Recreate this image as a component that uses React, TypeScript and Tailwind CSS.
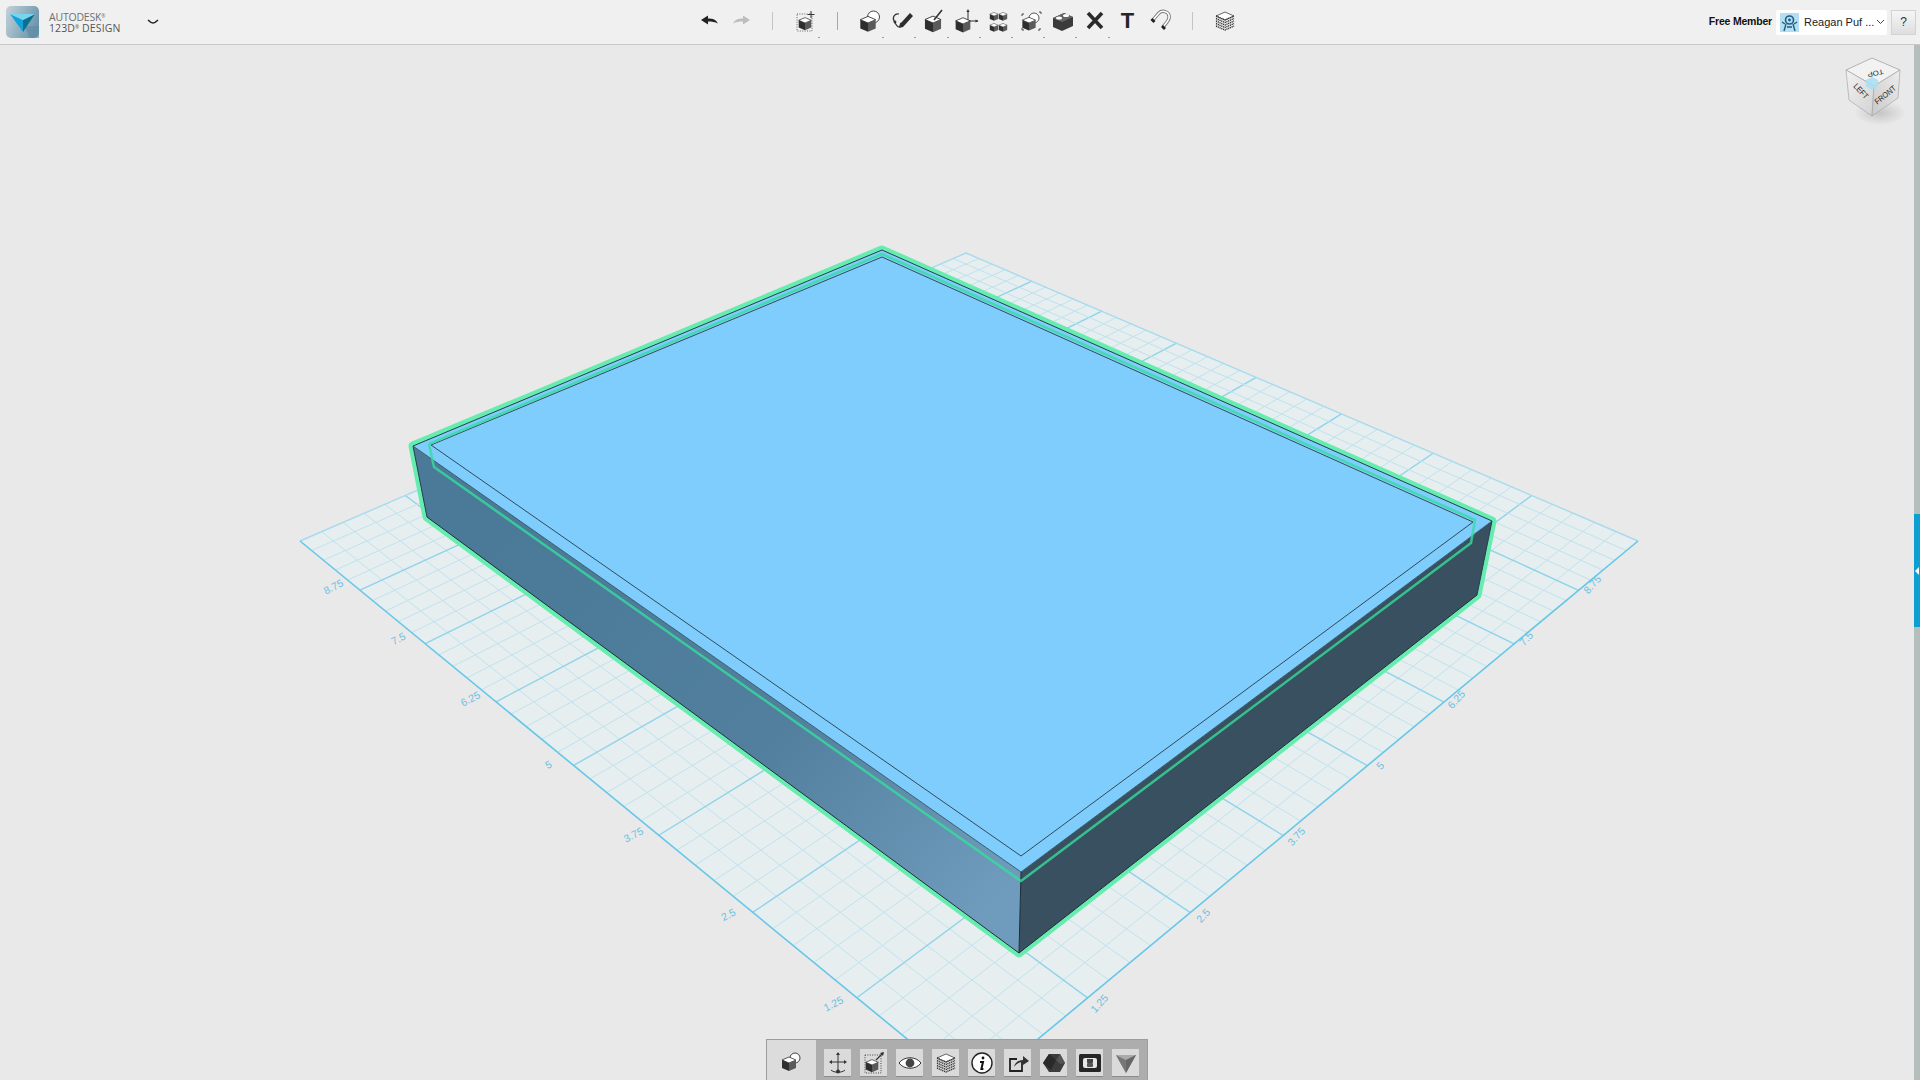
import type { ReactNode } from 'react'

type Pt = [number, number]

// grid plate corners in page coordinates, perspective is solved from them
const A: Pt = [973, 1093]
const B: Pt = [300, 541]
const C: Pt = [966, 253]
const D: Pt = [1638, 541]

function makeHomography() {
  const sx = A[0] - B[0] + C[0] - D[0]
  const sy = A[1] - B[1] + C[1] - D[1]
  const dx1 = B[0] - C[0]
  const dx2 = D[0] - C[0]
  const dy1 = B[1] - C[1]
  const dy2 = D[1] - C[1]
  const den = dx1 * dy2 - dx2 * dy1
  const g = (sx * dy2 - dx2 * sy) / den
  const h = (dx1 * sy - sx * dy1) / den
  return (u: number, v: number): Pt => {
    const w = g * u + h * v + 1
    return [
      ((B[0] - A[0] + g * B[0]) * u + (D[0] - A[0] + h * D[0]) * v + A[0]) / w,
      ((B[1] - A[1] + g * B[1]) * u + (D[1] - A[1] + h * D[1]) * v + A[1]) / w,
    ]
  }
}

const project = makeHomography()
const GRID_STEPS = 40

function GridLines() {
  const lines = []
  for (let i = 1; i < GRID_STEPS; i++) {
    const t = i / GRID_STEPS
    const major = i % 5 === 0
    const stroke = major ? '#8fd3ea' : '#c0e2ed'
    const width = major ? 1.4 : 1
    const a = project(t, 0)
    const b = project(t, 1)
    const c = project(0, t)
    const d = project(1, t)
    lines.push(<line key={`u${i}`} x1={a[0]} y1={a[1]} x2={b[0]} y2={b[1]} stroke={stroke} strokeWidth={width} />)
    lines.push(<line key={`v${i}`} x1={c[0]} y1={c[1]} x2={d[0]} y2={d[1]} stroke={stroke} strokeWidth={width} />)
  }
  return <>{lines}</>
}

const leftLabels: [string, number, number][] = [
  ['8.75', 335, 590], ['7.5', 400, 642], ['6.25', 472, 702], ['5', 550, 768],
  ['3.75', 635, 838], ['2.5', 730, 918], ['1.25', 835, 1007],
]
const rightLabels: [string, number, number][] = [
  ['8.75', 1595, 587], ['7.5', 1529, 641], ['6.25', 1459, 702], ['5', 1383, 768],
  ['3.75', 1299, 839], ['2.5', 1206, 918], ['1.25', 1102, 1006],
]

function Scene() {
  return (
    <svg className="block h-full w-full" viewBox="0 45 1914 1035">
      <defs>
        <linearGradient id="sideL" x1="520" y1="520" x2="980" y2="920" gradientUnits="userSpaceOnUse">
          <stop offset="0%" stopColor="#4a7a98" />
          <stop offset="55%" stopColor="#527f9e" />
          <stop offset="100%" stopColor="#6f9cbc" />
        </linearGradient>
      </defs>

      {/* grid plate */}
      <polygon points={[A, B, C, D].map((p) => p.join(',')).join(' ')} fill="#e6eef0" />
      <GridLines />
      <line x1={C[0]} y1={C[1]} x2={B[0]} y2={B[1]} stroke="#a6dbed" strokeWidth="1.4" />
      <line x1={C[0]} y1={C[1]} x2={D[0]} y2={D[1]} stroke="#a6dbed" strokeWidth="1.4" />
      <line x1={B[0]} y1={B[1]} x2={A[0]} y2={A[1]} stroke="#66c6e8" strokeWidth="1.6" />
      <line x1={D[0]} y1={D[1]} x2={A[0]} y2={A[1]} stroke="#66c6e8" strokeWidth="1.6" />
      {leftLabels.map(([t, x, y]) => (
        <text key={`l${t}`} x={x} y={y} transform={`rotate(-27 ${x} ${y})`} textAnchor="middle" className="font-['Liberation_Sans',sans-serif]" fontSize="10.5" fill="#69c1e2">{t}</text>
      ))}
      {rightLabels.map(([t, x, y]) => (
        <text key={`r${t}`} x={x} y={y} transform={`rotate(-48 ${x} ${y})`} textAnchor="middle" className="font-['Liberation_Sans',sans-serif]" fontSize="10.5" fill="#69c1e2">{t}</text>
      ))}

      {/* selected body */}
      <polygon points="413,446 882,250 1492,521 1477,595 1019,953 427,517" fill="#66ecaf" stroke="#66ecaf" strokeWidth="9" strokeLinejoin="round" />
      <polygon points="413,446 1021,872 1019,953 427,517" fill="url(#sideL)" />
      <polygon points="1021,872 1492,521 1477,595 1019,953" fill="#38505f" />
      <polygon points="413,446 882,250 1492,521 1021,872" fill="#7fcdfc" />
      <polyline points="427,517 1019,953 1477,595" fill="none" stroke="#1d2e3b" strokeWidth="1" />
      <polyline points="427,517 413,446 882,250 1492,521 1477,595" fill="none" stroke="#24404f" strokeWidth="1" />
      <polyline points="413,446 1021,872 1492,521" fill="none" stroke="#3c5a6c" strokeWidth="1" />
      <line x1="1021" y1="872" x2="1019" y2="953" stroke="#1d2e3b" strokeWidth="1" />
      <polygon points="431,445 882,257 1473,522 1021,856" fill="none" stroke="#33495a" strokeWidth="1" />
      <polyline points="429,444 882,254 1475,520 1471,543 1021,881 434,467 429,444" fill="none" stroke="#36dc9f" strokeWidth="2.5" opacity="0.8" strokeLinejoin="round" />
    </svg>
  )
}

function Cube({ x, y, s = 1, top = '#fff' }: { x: number; y: number; s?: number; top?: string }) {
  return (
    <g transform={`translate(${x} ${y}) scale(${s})`}>
      <polygon points="0,-6 7,-3 0,0 -7,-3" fill={top} stroke="#333" strokeWidth="0.8" />
      <polygon points="-7,-3 0,0 0,8 -7,5" fill="#2e2e2e" />
      <polygon points="7,-3 0,0 0,8 7,5" fill="#5a5a5a" />
    </g>
  )
}

function Stripes() {
  return (
    <g>
      <polygon points="12,3 21,7 12,11 3,7" fill="#fff" stroke="#444" strokeWidth="0.8" />
      {[9, 11.5, 14, 16.5, 19].map((y) => (
        <polyline key={y} points={`3,${y - 2} 12,${y + 2} 21,${y - 2}`} fill="none" stroke="#333" strokeWidth="1.4" strokeDasharray="1.2 0.7" />
      ))}
    </g>
  )
}

function Icon({ children }: { children: ReactNode }) {
  return (
    <svg width="24" height="24" viewBox="0 0 24 24" fill="none">
      {children}
    </svg>
  )
}

const toolIcons: { key: string; dot: boolean; icon: ReactNode }[] = [
  {
    key: 'primitive', dot: true,
    icon: <Icon><circle cx="15.5" cy="8" r="6" stroke="#444" strokeWidth="1" fill="#fff" /><Cube x={10} y={14} s={1.1} /></Icon>,
  },
  {
    key: 'sketch', dot: true,
    icon: <Icon><path d="M9 5c-4-1-7 3-5 7s3 6 5 6c2 0 1-4 2-4" stroke="#333" strokeWidth="1.2" /><path d="M10 15l-1 4 4-1 10-11-3-3z" fill="#2e2e2e" /><circle cx="5" cy="13" r="1.4" fill="#333" /></Icon>,
  },
  {
    key: 'construct', dot: true,
    icon: <Icon><Cube x={11} y={14} s={1.15} /><path d="M12 11l8-10" stroke="#333" strokeWidth="1.6" /></Icon>,
  },
  {
    key: 'modify', dot: true,
    icon: <Icon><Cube x={8} y={15} s={1.05} /><path d="M13 11V2M14 12h9" stroke="#333" strokeWidth="1" /><path d="M13 0l-1.6 3h3.2zM23.5 12l-3-1.6v3.2z" fill="#333" /></Icon>,
  },
  {
    key: 'pattern', dot: true,
    icon: <Icon><Cube x={7} y={7} s={0.6} /><Cube x={16} y={7} s={0.6} /><Cube x={7} y={18} s={0.6} /><Cube x={16} y={18} s={0.6} /></Icon>,
  },
  {
    key: 'group', dot: true,
    icon: <Icon><circle cx="15" cy="9" r="5" stroke="#555" strokeWidth="1" fill="#fff" /><Cube x={10} y={14} s={0.95} /><path d="M3 5h2M3 5v2M20 3h2v2M3 21h2M3 21v-2M21 21h-2M21 21v-2" stroke="#444" strokeWidth="1" /></Icon>,
  },
  {
    key: 'combine', dot: true,
    icon: <Icon><polygon points="2,9 13,4 22,8 22,17 11,22 2,18" fill="#3b3b3b" /><polygon points="2,9 11,13 22,8 13,4" fill="#666" /><ellipse cx="8" cy="9" rx="3" ry="1.6" fill="#fff" /><ellipse cx="15" cy="6.5" rx="3" ry="1.6" fill="#fff" /></Icon>,
  },
  {
    key: 'delete', dot: true,
    icon: <Icon><path d="M5 4l14 15M19 4L5 19" stroke="#2a2a2a" strokeWidth="3.6" /></Icon>,
  },
  {
    key: 'text', dot: false,
    icon: <span className="text-[22px] leading-[24px] font-bold text-[#262626]">T</span>,
  },
  {
    key: 'snap', dot: false,
    icon: <Icon><path d="M4 12l7-8c3-3 11-2 10 5-.3 3-3 5-6 9" stroke="#777" strokeWidth="3.4" /><path d="M4 12l7-8c3-3 11-2 10 5-.3 3-3 5-6 9" stroke="#fff" strokeWidth="1.6" /><path d="M2.5 11l3 3 2-2-3-3zM13 18l3 3 2-2-3-3z" fill="#222" /></Icon>,
  },
]

function ToolButton({ dot, width, children }: { dot: boolean; width: string; children: ReactNode }) {
  return (
    <div className={`relative flex h-8 items-center justify-center ${width}`}>
      {children}
      {dot && <span className="absolute top-[32px] right-[2px] h-px w-[2px] bg-[#999]" />}
    </div>
  )
}

function TopBar() {
  return (
    <header className="flex h-[45px] shrink-0 border-b border-[#c9c9c9] bg-[#f0f0f0] font-['Liberation_Sans',sans-serif]">
      <div className="flex w-[693px] shrink-0 items-center pl-[6px]">
        <svg width="33" height="32" viewBox="0 0 33 32">
          <defs>
            <linearGradient id="logoBg" x1="0" y1="0" x2="1" y2="0.4">
              <stop offset="0%" stopColor="#c4d2da" />
              <stop offset="100%" stopColor="#6d98ae" />
            </linearGradient>
          </defs>
          <rect width="33" height="32" rx="5" fill="url(#logoBg)" />
          <polygon points="18,20 33,20 33,32 24,32" fill="#5f8ba2" opacity="0.6" />
          <polygon points="4,8 17,14 17,26" fill="#12a2da" />
          <polygon points="29,8 17,14 17,26" fill="#0b6f8d" />
          <polygon points="4,8 29,8 17,14" fill="#76d5ef" />
        </svg>
        <div className="ml-[10px] flex w-[90px] flex-col pt-[1px] text-[10.5px] leading-[11px] font-['Open_Sans',sans-serif]">
          <span className="tracking-[-0.2px] text-[#6f6f6f]">AUTODESK<sup className="text-[5px]">®</sup></span>
          <span className="tracking-[0.1px] text-[#555]">123D<sup className="text-[5px]">®</sup> DESIGN</span>
        </div>
        <svg className="ml-[8px]" width="12" height="8" viewBox="0 0 12 8">
          <path d="M1 2c2 2 3 3 5 3s3-1 5-3" fill="none" stroke="#222" strokeWidth="1.5" />
        </svg>
      </div>

      <div className="flex items-start pt-[5px]">
        <ToolButton dot={false} width="w-8">
          <Icon><path d="M4 11l7-4.5v3c5 0 8 1 10 5-3-1.6-6-2-10-2v3z" fill="#222" /></Icon>
        </ToolButton>
        <ToolButton dot={false} width="w-8">
          <Icon><path d="M21 11l-7-4.5v3c-5 0-8 1-10 5 3-1.6 6-2 10-2v3z" fill="#bdbdbd" /></Icon>
        </ToolButton>
        <span className="mt-[7px] ml-[15px] h-[18px] w-px bg-[#c4c4c4]" />
        <div className="ml-[17px]">
          <ToolButton dot width="w-8">
            <Icon>
              <rect x="3" y="5" width="15" height="17" stroke="#555" strokeWidth="0.9" strokeDasharray="1 1.4" />
              <Cube x={11} y={14} s={0.9} />
              <path d="M17 2v7M13.5 5.5h7" stroke="#333" strokeWidth="1" />
            </Icon>
          </ToolButton>
        </div>
        <span className="mt-[7px] ml-[15px] h-[18px] w-px bg-[#a8a8a8]" />
        <div className="ml-[16px] flex">
          {toolIcons.map((t) => (
            <ToolButton key={t.key} dot={t.dot} width="w-[32.2px]">
              {t.icon}
            </ToolButton>
          ))}
        </div>
        <span className="mt-[7px] ml-[16px] h-[18px] w-px bg-[#c4c4c4]" />
        <div className="ml-[16px]">
          <ToolButton dot={false} width="w-8">
            <Icon><Stripes /></Icon>
          </ToolButton>
        </div>
      </div>

      <div className="ml-auto flex items-center gap-[4px] pr-[4px]">
        <span className="text-[10.5px] font-bold tracking-[-0.2px] text-[#111]">Free Member</span>
        <div className="flex h-[25px] w-[111px] items-center rounded-[2px] bg-white pl-[4px]">
          <svg width="19" height="19" viewBox="0 0 19 19">
            <rect width="19" height="19" fill="#b5dff0" />
            <circle cx="9.5" cy="7" r="4" fill="none" stroke="#1e5f86" strokeWidth="1.6" />
            <circle cx="9.5" cy="7" r="1.4" fill="#1e5f86" />
            <path d="M4 18l2-7M15 18l-2-7M2 9l3 2M17 9l-3 2M7 14h5" stroke="#1e5f86" strokeWidth="1.4" />
          </svg>
          <span className="ml-[5px] text-[11px] whitespace-nowrap text-[#222]">Reagan Puf ...</span>
          <svg className="ml-[2px]" width="9" height="6" viewBox="0 0 9 6">
            <path d="M1 1l3.5 3.5L8 1" fill="none" stroke="#444" strokeWidth="1" />
          </svg>
        </div>
        <button className="flex h-[25px] w-[25px] items-center justify-center border border-[#d2d2d2] bg-gradient-to-b from-[#f6f6f6] to-[#dedede] text-[12px] text-[#333]">?</button>
      </div>
    </header>
  )
}

function ViewCube() {
  return (
    <svg className="absolute top-[10px] right-[6px]" width="70" height="72" viewBox="0 0 70 72">
      <defs>
        <linearGradient id="vcL" x1="0" y1="0" x2="1" y2="1">
          <stop offset="0%" stopColor="#f2f2f2" />
          <stop offset="100%" stopColor="#d2d2d2" />
        </linearGradient>
        <linearGradient id="vcR" x1="1" y1="0" x2="0" y2="1">
          <stop offset="0%" stopColor="#ededed" />
          <stop offset="100%" stopColor="#c9c9c9" />
        </linearGradient>
        <radialGradient id="vcS">
          <stop offset="0%" stopColor="#bcbcbc" stopOpacity="0.8" />
          <stop offset="100%" stopColor="#bcbcbc" stopOpacity="0" />
        </radialGradient>
      </defs>
      <ellipse cx="42" cy="58" rx="26" ry="12" fill="url(#vcS)" />
      <polygon points="34,3 62,15 36,31 8,15" fill="#f2f2f2" stroke="#9a9a9a" strokeWidth="0.7" />
      <polygon points="8,15 36,31 34,61 11,45" fill="url(#vcL)" stroke="#a8a8a8" strokeWidth="0.7" />
      <polygon points="62,15 36,31 34,61 60,43" fill="url(#vcR)" stroke="#a8a8a8" strokeWidth="0.7" />
      <polygon points="34,22 40,25 40,31 34,35 28,31 28,25" fill="#aadff2" opacity="0.9" />
      <g className="font-['Liberation_Sans',sans-serif]" fontSize="8" fill="#222" textAnchor="middle">
        <text x="0" y="0" transform="translate(37 16) rotate(168) scale(1 0.85)">TOP</text>
        <text x="0" y="0" transform="translate(21 38) rotate(48) scale(0.9 1)">LEFT</text>
        <text x="0" y="0" transform="translate(49 42) rotate(-38) scale(0.9 1)">FRONT</text>
      </g>
    </svg>
  )
}

const bottomIcons: { key: string; icon: ReactNode }[] = [
  {
    key: 'move',
    icon: <><path d="M12 3v16M5 11h14" stroke="#333" strokeWidth="1" /><path d="M12 1l-2 3h4zM3 11l3-2v4zM21 11l-3-2v4z" fill="#333" /><path d="M5 19c3 3 11 3 14 0" stroke="#333" strokeWidth="1" /><circle cx="12" cy="20.5" r="2" fill="#333" /></>,
  },
  {
    key: 'align',
    icon: <><rect x="3" y="4" width="16" height="18" stroke="#333" strokeWidth="0.9" strokeDasharray="1 1.4" /><Cube x={10} y={14} s={0.9} /><path d="M14 9l7-7" stroke="#333" strokeWidth="1.2" /><path d="M22 1l-4 1 3 3z" fill="#333" /></>,
  },
  {
    key: 'eye',
    icon: <><path d="M1 12c5-7 17-7 22 0-5 7-17 7-22 0z" fill="#fff" stroke="#333" strokeWidth="1" /><circle cx="12" cy="12" r="4.4" fill="#444" /></>,
  },
  { key: 'stripes', icon: <Stripes /> },
  {
    key: 'info',
    icon: <><circle cx="12" cy="12" r="10" fill="#fff" stroke="#222" strokeWidth="1.4" /><circle cx="13" cy="7" r="1.4" fill="#111" /><path d="M10 11h3l-1.6 7h2" stroke="#111" strokeWidth="2" /></>,
  },
  {
    key: 'share',
    icon: <><path d="M16 11v9H4V8h7" stroke="#222" strokeWidth="1.8" /><path d="M8 16c1-5 5-7 9-7V5l6 5-6 4v-3c-3 0-6 1-9 5z" fill="#333" /></>,
  },
  {
    key: 'solid',
    icon: <><polygon points="7,3 18,3 23,12 18,21 7,21 1,12" fill="#3c3c3c" /><polygon points="1,12 7,3 14,9 9,19" fill="#2a2a2a" /><polygon points="14,9 18,3 23,12 18,13" fill="#555" /></>,
  },
  {
    key: 'print',
    icon: <><rect x="1" y="3" width="22" height="18" rx="1.5" fill="#262626" /><rect x="5" y="7" width="14" height="10" rx="2" fill="#e8e8e8" /><path d="M9 8v3c0 2 6 2 6 0V8" fill="#444" /><rect x="9" y="12" width="6" height="4" rx="1" fill="#555" /></>,
  },
  {
    key: 'logo',
    icon: <><polygon points="2,4 22,4 12,22" fill="#8d8d8d" /><polygon points="2,4 12,9 12,22" fill="#777" /><polygon points="2,4 22,4 12,9" fill="#aaa" /><polygon points="12,9 22,4 12,22" fill="#666" /></>,
  },
]

function BottomBar() {
  return (
    <div className="absolute bottom-0 left-[766px] flex h-[41px] w-[382px] border border-b-0 border-[#9d9d9d] bg-[#adadad]">
      <div className="flex w-[49px] items-center justify-center bg-[#dcdcdc] pt-[2px]">
        <Icon><circle cx="15" cy="9" r="5" stroke="#444" strokeWidth="1" fill="#fff" /><Cube x={9} y={14} s={1} /></Icon>
      </div>
      <div className="ml-[8px] flex items-start gap-[9px] pt-[9px]">
        {bottomIcons.map((b) => (
          <div key={b.key} className="flex h-[28px] w-[27px] items-center justify-center border-b border-[#8c8c8c] bg-[#dadada]">
            <Icon>{b.icon}</Icon>
          </div>
        ))}
      </div>
    </div>
  )
}

export default function App() {
  return (
    <div className="flex h-screen w-full flex-col overflow-hidden bg-[#e9e9e9]">
      <TopBar />
      <div className="flex min-h-0 flex-1">
        <main className="relative min-w-0 flex-1">
          <Scene />
          <ViewCube />
          <BottomBar />
        </main>
        {/* side panel handle */}
        <aside className="flex w-[6px] shrink-0 flex-col bg-[#b4bfbd]">
          <div className="h-[469px]" />
          <div className="flex h-[113px] items-center justify-center bg-[#0b9fd2]">
            <span className="h-0 w-0 border-y-[4px] border-r-[4px] border-y-transparent border-r-white" />
          </div>
        </aside>
      </div>
    </div>
  )
}
